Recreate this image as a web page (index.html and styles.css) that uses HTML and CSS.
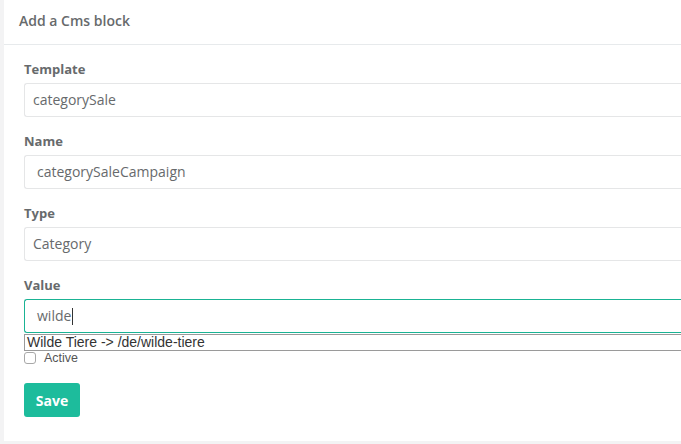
FILE: index.html
```html
<!DOCTYPE html>
<html>
<head>
<meta charset="utf-8">
<link rel="stylesheet" href="styles.css">
</head>
<body>
<div class="panel">
  <div class="panel-title"><h5>Add a Cms block</h5></div>
  <div class="panel-body">
    <div class="form-group">
      <label class="label">Template</label>
      <div class="control select-like">categorySale</div>
    </div>
    <div class="form-group">
      <label class="label">Name</label>
      <div class="control">categorySaleCampaign</div>
    </div>
    <div class="form-group">
      <label class="label">Type</label>
      <div class="control select-like">Category</div>
    </div>
    <div class="form-group last">
      <label class="label">Value</label>
      <div class="control focused">wilde<span class="caret"></span></div>
      <div class="suggest">Wilde Tiere -&gt; /de/wilde-tiere</div>
      <div class="check-row"><span class="checkbox"></span><span class="check-label">Active</span></div>
    </div>
    <button class="btn">Save</button>
  </div>
</div>
</body>
</html>
```

FILE: styles.css
```css
html, body {
  margin: 0;
  padding: 0;
  background: #f3f3f4;
  height: 444px;
  overflow: hidden;
}
body {
  font-family: "Open Sans", "Liberation Sans", sans-serif;
  color: #676a6c;
}
.panel {
  margin-left: 4px;
  width: 720px;
  height: 441px;
  background: #ffffff;
}
.panel-title {
  height: 44px;
  border-bottom: 1px solid #e7eaec;
  padding: 0 15px;
  display: flex;
  align-items: center;
}
.panel-title h5 {
  margin: 0;
  font-size: 14px;
  font-weight: 600;
  color: #676a6c;
  line-height: 18px;
  padding-bottom: 2px;
}
.panel-body {
  padding: 15px 20px 0 20px;
}
.form-group {
  margin-bottom: 15px;
}
.form-group.last {
  margin-bottom: 0;
}
.label {
  display: block;
  font-size: 13px;
  font-weight: 700;
  line-height: 18px;
  margin-bottom: 5px;
  color: #676a6c;
}
.control {
  box-sizing: border-box;
  height: 34px;
  border: 1px solid #e5e6e7;
  border-radius: 3px 0 0 3px;
  border-right: none;
  padding: 0 12px;
  font-size: 14px;
  line-height: 32px;
  color: #676a6c;
  display: flex;
  align-items: center;
}
.control.select-like {
  padding-left: 8px;
}
.control.focused {
  border-color: #1ab394;
}
.caret {
  display: inline-block;
  width: 1px;
  height: 17px;
  background: #333;
  margin-left: 1px;
}
.suggest {
  box-sizing: border-box;
  margin-top: 1px;
  height: 17px;
  border: 1px solid #9a9a9a;
  border-right: none;
  padding-left: 2px;
  font-family: "Liberation Sans", Arial, sans-serif;
  font-size: 14px;
  line-height: 15px;
  color: #333;
}
.check-row {
  display: flex;
  align-items: center;
  height: 12px;
  margin-top: 1px;
}
.checkbox {
  box-sizing: border-box;
  width: 12px;
  height: 12px;
  border: 1px solid #a8a8a8;
  border-radius: 3px;
  background: #fff;
}
.check-label {
  margin-left: 8px;
  font-family: "Liberation Sans", Arial, sans-serif;
  font-size: 12.5px;
  line-height: 12px;
  color: #555;
}
.btn {
  display: block;
  margin-top: 19px;
  height: 34px;
  width: 56px;
  border: none;
  border-radius: 3px;
  background: #1dbc9c;
  color: #ffffff;
  font-family: "Open Sans", "Liberation Sans", sans-serif;
  font-size: 14px;
  font-weight: 700;
  padding: 0;
}
```
